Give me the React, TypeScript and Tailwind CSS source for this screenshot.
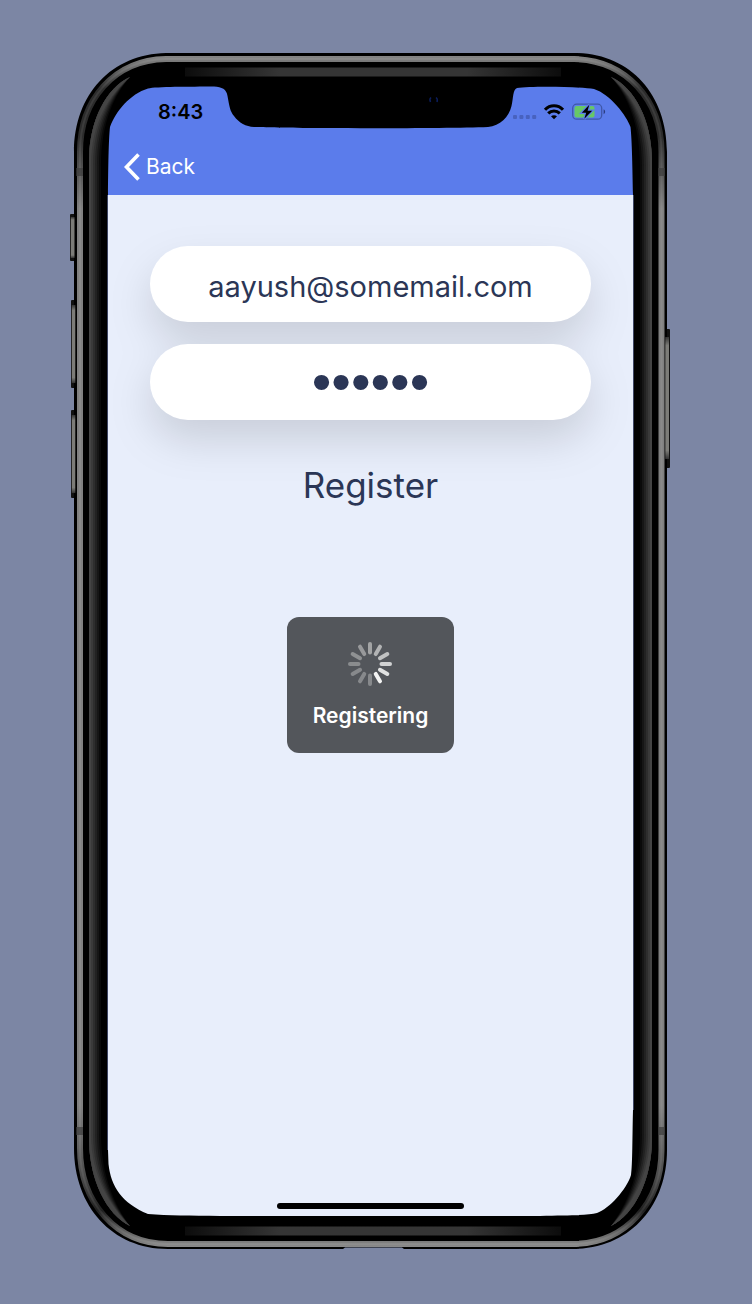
import React from "react";

const SPOKES = [
  "#a3a4a5",
  "#b2b3b4",
  "#c0c1c2",
  "#d0d1d2",
  "#e0e1e1",
  "#f3f3f3",
  "#87898c",
  "#87898c",
  "#87898c",
  "#8a8c8e",
  "#8f9193",
  "#98999b",
];

const BODY =
  "M166 53H576C630 54 667 94 667 152V1150C667 1206 630 1249 572 1249H404L402 1247.5H345L343 1249H168C112 1249 74 1206 74 1148V152C74 94 112 54 166 53Z";

const SCREEN =
  "M108 195C108.300 168 108.600 140 110 127C116 111 130 94 148 88.500C156 86.500 190 86.800 214 86.500C222 87 226.500 89 227.500 96C229.500 107 230 111 234 116C239 123 246 126.500 254 127C290 128.500 440 128.800 488 127C500 126 509 117 511.500 106C513.500 98 512.500 90 517 88C530 86 580 86.500 594 89C610 94 627 116 630.500 127C632 140 632.500 170 633 195V1110C632.300 1135 632.600 1165 631 1175C627 1189 609 1209 597 1213C588 1215.500 570 1215.300 540 1216H220C190 1215.500 168 1215.500 148 1214C122 1203 111 1187 108.500 1164L108 1150Z";

const RING =
  "M166 59H574C626 60 661.500 100 661.500 152V1150C661.500 1202 626 1244 572 1244H168C116 1244 80 1202 80 1148V152C80 100 114 60 166 59Z";

// Reflection layers along the inner bezel, widest and darkest first.
const REFLECTION = [
  { width: 12, color: "#0a0a0a" },
  { width: 10, color: "#161616" },
  { width: 8, color: "#222" },
  { width: 6, color: "#2e2e2e" },
  { width: 4, color: "#3a3a3a" },
  { width: 2, color: "#444" },
];

function reflectionPath(w: number) {
  const x = 89 + w;
  return `M89 158C90 120 106 88 130 77C${109 + w / 2} 94 ${x} 122 ${x} 166V1134C${x} 1176 ${109 + w / 2} 1206 130 1226C106 1214 90 1180 89 1142Z`;
}

function Reflection() {
  return (
    <>
      {REFLECTION.map(({ width, color }) => (
        <path key={width} d={reflectionPath(width)} fill={color} />
      ))}
    </>
  );
}

function DeviceFrame() {
  return (
    <svg
      viewBox="70 53 600 1196"
      preserveAspectRatio="none"
      className="pointer-events-none absolute inset-0 h-full w-full"
      aria-hidden="true"
    >
      <defs>
        <linearGradient id="ring" x1="0" y1="53" x2="0" y2="1249" gradientUnits="userSpaceOnUse">
          <stop offset="0" stopColor="#8c8c8c" />
          <stop offset="0.012" stopColor="#6c6c6c" />
          <stop offset="0.03" stopColor="#2c2c2c" />
          <stop offset="0.07" stopColor="#2c2c2c" />
          <stop offset="0.13" stopColor="#808080" />
          <stop offset="0.88" stopColor="#808080" />
          <stop offset="0.94" stopColor="#4a4a4a" />
          <stop offset="0.968" stopColor="#202020" />
          <stop offset="0.985" stopColor="#606060" />
          <stop offset="1" stopColor="#909090" />
        </linearGradient>
        <linearGradient id="strip">
          <stop offset="0" stopColor="#0c0c0c" />
          <stop offset="0.25" stopColor="#353535" />
          <stop offset="0.75" stopColor="#353535" />
          <stop offset="1" stopColor="#0c0c0c" />
        </linearGradient>
        <linearGradient id="key" x1="0" y1="0" x2="0" y2="1">
          <stop offset="0" stopColor="#333" />
          <stop offset="0.07" stopColor="#7c7c78" />
          <stop offset="0.93" stopColor="#7c7c78" />
          <stop offset="1" stopColor="#333" />
        </linearGradient>
      </defs>

      <g fill="#111">
        <rect x="70" y="214" width="6" height="47" rx="1" />
        <rect x="71" y="300" width="5" height="88" rx="1" />
        <rect x="71" y="410" width="5" height="88" rx="1" />
        <rect x="665" y="329" width="5" height="139" rx="1" />
      </g>

      <path d={BODY + SCREEN} fill="#000" fillRule="evenodd" />
      <g fill="url(#key)">
        <rect x="70.800" y="217" width="3.700" height="41" />
        <rect x="71.800" y="305" width="3.500" height="78" />
        <rect x="71.800" y="415" width="3.500" height="78" />
        <rect x="665.300" y="337" width="3.700" height="122" />
      </g>
      <path d={RING} fill="none" stroke="url(#ring)" strokeWidth="6" />
      <path d={RING} fill="none" stroke="#fff" strokeOpacity="0.08" strokeWidth="2" />
      <g fill="#3c3c3c" fillOpacity="0.7">
        <rect x="76" y="168" width="7" height="8" />
        <rect x="658" y="168" width="7" height="8" />
        <rect x="76" y="1127" width="7" height="8" />
        <rect x="658" y="1127" width="7" height="8" />
      </g>

      <Reflection />
      <g transform="translate(741 0) scale(-1 1)">
        <Reflection />
      </g>
      <rect x="185" y="67.500" width="376" height="9" fill="url(#strip)" />
      <rect x="185" y="1226.500" width="376" height="9" fill="url(#strip)" />
      <path
        d="M431 97.500C429.800 98.500 429.800 100.500 430.500 102M436 97.500C437.500 98.500 437.500 100.500 437 102"
        fill="none"
        stroke="#0b1d5c"
        strokeWidth="1.500"
      />
      <path d="M107.500 195V1150M633.500 195V1110" stroke="#3d4563" strokeWidth="1" />
    </svg>
  );
}

function StatusIcons() {
  return (
    <svg width="94" height="20" viewBox="512 102 94 20" aria-hidden="true">
      <g fill="#4862bf">
        <rect x="513" y="115" width="4" height="4" rx="1" />
        <rect x="519.400" y="115" width="4" height="4" rx="1" />
        <rect x="525.800" y="115" width="4" height="4" rx="1" />
        <rect x="532.200" y="115" width="4" height="4" rx="1" />
      </g>
      <g fill="none" stroke="#000" strokeWidth="3.100">
        <path d="M545 109.700C550 104.400 558 104.400 563 109.700" />
        <path d="M548.200 113.400C551.500 110.200 556.500 110.200 559.800 113.400" />
      </g>
      <path d="M551 116.300C552.800 114.800 555.200 114.800 557 116.300L554 119.300Z" fill="#000" />
      <rect x="572.700" y="104.200" width="29" height="15" rx="4" fill="none" stroke="#3f57a8" strokeWidth="1.300" />
      <path d="M603.600 109.300C605.600 110.200 605.600 113.200 603.600 114.200Z" fill="#2b3c80" />
      <rect x="574.500" y="106" width="20" height="11.400" rx="2" fill="#67c766" />
      <path
        d="M589.300 104.800L581.800 112.800H586.200L584.300 118.800L592.200 110.800H587.600Z"
        fill="#000"
        stroke="#5b7ceb"
        strokeWidth="2.400"
        paintOrder="stroke"
      />
    </svg>
  );
}

function Spinner() {
  return (
    <svg className="h-11 w-11" viewBox="-22 -22 44 44" aria-hidden="true">
      {SPOKES.map((color, i) => (
        <line
          key={i}
          y1="-11.500"
          y2="-20"
          stroke={color}
          strokeWidth="4"
          strokeLinecap="round"
          transform={`rotate(${i * 30})`}
        />
      ))}
    </svg>
  );
}

export default function App() {
  return (
    <div className="min-h-screen bg-[#7c86a4] pt-[53px] pr-[82px] pb-[55px] pl-[70px] font-['Inter','Liberation_Sans',sans-serif]">
      <div className="relative mx-auto flex min-h-[1196px] max-w-[600px] flex-col pt-[33px] pr-[37px] pb-[33px] pl-[38px]">
        <header className="rounded-t-[44px] bg-[#5b7ceb]">
          <div className="flex h-[52px] items-center justify-between pr-[27px] pl-[50px]">
            <time className="text-xl font-semibold text-black">8:43</time>
            <StatusIcons />
          </div>
          <nav className="flex h-[57px] items-center pl-4">
            <a href="#back" className="flex items-center gap-1.5 text-[21px] text-white">
              <svg width="16" height="28" viewBox="0 0 16 28" aria-hidden="true">
                <path d="M14.500 1.500L2.500 14L14.500 26.500" fill="none" stroke="#fff" strokeWidth="3.600" />
              </svg>
              Back
            </a>
          </nav>
        </header>

        <main className="flex flex-1 flex-col rounded-b-[48px] bg-[#e8eefb] px-[42px] pt-[51px] pb-[7px]">
          <form className="flex flex-col items-center text-[#2b3656]" onSubmit={(e) => e.preventDefault()}>
            <div className="flex w-full flex-col gap-[22px] drop-shadow-[0_20px_20px_rgba(0,0,0,0.13)]">
              <input
                type="email"
                aria-label="Email"
                defaultValue="aayush@somemail.com"
                className="h-[76px] w-full rounded-full bg-white px-8 pt-1 text-center text-[29px] outline-none"
              />
              <input
                type="password"
                aria-label="Password"
                defaultValue="secret"
                className="h-[76px] w-full rounded-full bg-white px-8 text-center font-['Liberation_Sans',sans-serif] text-[56px] outline-none"
              />
            </div>
            <button type="submit" className="mt-10 px-4 text-[35px] leading-[50px]">
              Register
            </button>
          </form>

          <div
            role="status"
            className="mx-auto mt-[107px] flex h-[136px] flex-col items-center rounded-xl bg-[#53565b] px-[26px] pt-[25px] text-white"
          >
            <Spinner />
            <p className="mt-3.5 text-[21px] leading-8 font-semibold">Registering</p>
          </div>

          <div className="mx-auto mt-auto h-1.5 w-[187px] rounded-full bg-black" />
        </main>

        <DeviceFrame />
      </div>
    </div>
  );
}
